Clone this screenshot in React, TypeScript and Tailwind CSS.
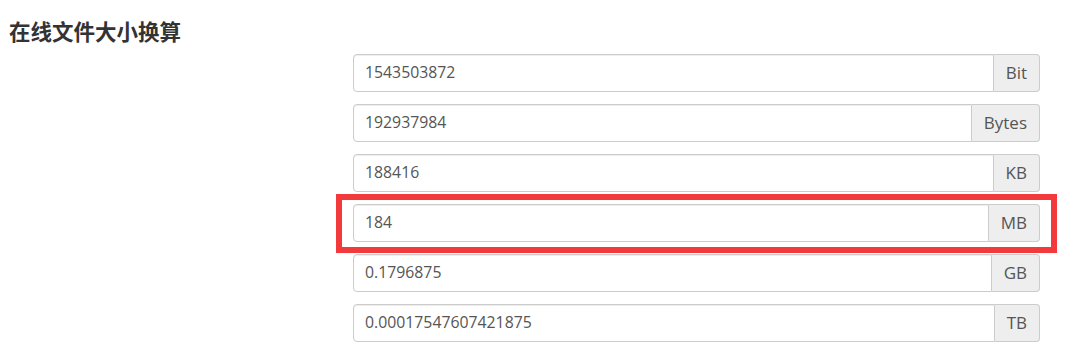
import React from "react";

interface UnitRow {
  value: string;
  unit: string;
  highlight?: boolean;
}

const rows: UnitRow[] = [
  { value: "1543503872", unit: "Bit" },
  { value: "192937984", unit: "Bytes" },
  { value: "188416", unit: "KB" },
  { value: "184", unit: "MB", highlight: true },
  { value: "0.1796875", unit: "GB" },
  { value: "0.00017547607421875", unit: "TB" },
];

function InputGroup({ row }: { row: UnitRow }) {
  return (
    <div className="relative flex h-[38px] w-full">
      <input
        readOnly
        value={row.value}
        className="min-w-0 flex-1 rounded-l-[4px] border border-[#cccccc] bg-white px-[11px] text-[15.8px] text-[#555555] shadow-[inset_0_1px_1px_rgba(0,0,0,0.075)] outline-none"
        style={{ fontFamily: '"Open Sans", "Noto Sans CJK SC", sans-serif' }}
      />
      <span className="flex items-center rounded-r-[4px] border border-l-0 border-[#cccccc] bg-[#eeeeee] px-[12px] text-[17px] text-[#555555]">
        {row.unit}
      </span>
      {row.highlight && (
        <div className="pointer-events-none absolute -top-[10px] -bottom-[11px] -left-[17px] -right-[17px] border-[6px] border-[#f2393b]" />
      )}
    </div>
  );
}

export default function App() {
  return (
    <div
      className="h-[350px] w-[1080px] overflow-hidden bg-white"
      style={{ fontFamily: '"Open Sans", "Noto Sans CJK SC", sans-serif' }}
    >
      <h1
        className="pl-[9px] pt-[15px] text-[21.5px] font-bold leading-[32px] text-[#333333]"
        style={{ fontFamily: '"Noto Sans CJK SC", sans-serif' }}
      >
        在线文件大小换算
      </h1>
      <div className="mt-[7px] flex">
        <div className="w-[353px] shrink-0" />
        <div className="flex w-[687px] flex-col gap-[12px]">
          {rows.map((row) => (
            <InputGroup key={row.unit} row={row} />
          ))}
        </div>
      </div>
    </div>
  );
}
